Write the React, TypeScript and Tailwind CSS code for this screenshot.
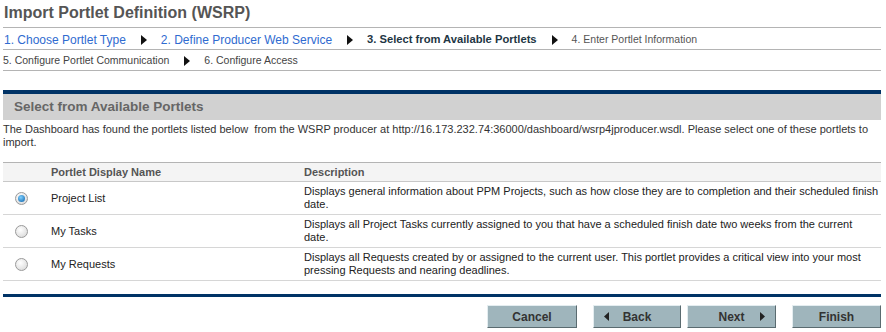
import React from "react";

const Arrow = () => (
  <svg width="7" height="10" viewBox="0 0 7 10" className="mx-[14px] shrink-0">
    <path d="M1 0 L7 5 L1 10 Z" fill="#111" />
  </svg>
);

const Radio = ({ checked }: { checked?: boolean }) => (
  <span className="relative inline-flex h-[13px] w-[13px] items-center justify-center rounded-full border border-[#9a9a9a] bg-[radial-gradient(circle_at_40%_35%,#ffffff,#d4d4d4)]">
    {checked && (
      <span className="h-[7px] w-[7px] rounded-full bg-[radial-gradient(circle_at_40%_35%,#7ed0ff,#0a5fa8)]" />
    )}
  </span>
);

const rows = [
  {
    name: "Project List",
    l1: "Displays general information about PPM Projects, such as how close they are to completion and their scheduled finish",
    l2: "date.",
    checked: true,
  },
  {
    name: "My Tasks",
    l1: "Displays all Project Tasks currently assigned to you that have a scheduled finish date two weeks from the current",
    l2: "date.",
  },
  {
    name: "My Requests",
    l1: "Displays all Requests created by or assigned to the current user. This portlet provides a critical view into your most",
    l2: "pressing Requests and nearing deadlines.",
  },
];

const Btn = ({ children, w }: { children: React.ReactNode; w: string }) => (
  <button
    className={`${w} flex h-[23px] items-center justify-center border border-t-[#e4edf0] border-l-[#e4edf0] border-b-[#5a6b70] border-r-[#5a6b70] bg-[#9fb5bc] text-[12px] font-bold text-[#333]`}
  >
    {children}
  </button>
);

export default function App() {
  return (
    <div className="w-[886px] h-[332px] overflow-hidden bg-white pl-[3px] pr-[5px] font-['Liberation_Sans',Arial,sans-serif] text-[#333]">
      <div className="pl-[1px] pt-[3px] h-[27px] text-[16px] font-bold leading-[20px] text-[#555]">
        Import Portlet Definition (WSRP)
      </div>
      <div className="border-t border-[#b4b4b4]" />
      <div className="flex h-[21px] items-center pl-[1px] pt-[2px] text-[12px]">
        <span className="text-[#2f6bd0]">1. Choose Portlet Type</span>
        <Arrow />
        <span className="text-[#2f6bd0]">2. Define Producer Web Service</span>
        <Arrow />
        <span className="text-[11.2px] font-bold text-[#1e3644]">3. Select from Available Portlets</span>
        <Arrow />
        <span className="text-[10.5px] text-[#555]">4. Enter Portlet Information</span>
      </div>
      <div className="border-t border-[#b4b4b4]" />
      <div className="flex h-[20px] items-center pt-[1px] text-[10.5px] text-[#444]">
        <span>5. Configure Portlet Communication</span>
        <Arrow />
        <span>6. Configure Access</span>
      </div>
      <div className="border-t border-[#b4b4b4]" />

      <div className="mt-[19px] h-[4px] bg-[#003366]" />
      <div className="flex h-[26px] items-center bg-[#d1d1d1] pl-[11px] text-[13.5px] font-bold text-[#666]">
        Select from Available Portlets
      </div>
      <div className="pt-[3px] text-[11px] leading-[13px] text-[#333]">
        The Dashboard has found the portlets listed below&nbsp; from the WSRP producer at
        http://16.173.232.74:36000/dashboard/wsrp4jproducer.wsdl. Please select one of these portlets to import.
      </div>

      <div className="mt-[13px] border-t border-[#b4b4b4]" />
      <div className="grid h-[18px] grid-cols-[48px_253px_1fr] items-center bg-[#f4f4f4] text-[11px] font-bold text-[#555]">
        <div />
        <div>Portlet Display Name</div>
        <div>Description</div>
      </div>
      <div className="border-t border-[#c8c8c8]" />
      {rows.map((r) => (
        <div key={r.name}>
          <div className="grid h-[32px] grid-cols-[48px_253px_1fr] items-center text-[11px] leading-[13px] text-[#222]">
            <div className="flex pl-[12px]">
              <Radio checked={r.checked} />
            </div>
            <div>{r.name}</div>
            <div className="whitespace-nowrap">
              {r.l1}
              <br />
              {r.l2}
            </div>
          </div>
          <div className="border-t border-[#d6d6d6]" />
        </div>
      ))}

      <div className="mt-[13px] h-[3px] bg-[#003366]" />
      <div className="mt-[8px] flex justify-end">
        <Btn w="w-[90px]">Cancel</Btn>
        <div className="w-[16px]" />
        <Btn w="w-[88px]">
          <span className="flex w-full items-center px-[10px]">
            <svg width="5" height="9" viewBox="0 0 5 9">
              <path d="M5 0 L0 4.5 L5 9 Z" fill="#222" />
            </svg>
            <span className="flex-1 text-center">Back</span>
            <span className="w-[5px]" />
          </span>
        </Btn>
        <div className="w-[6px]" />
        <Btn w="w-[89px]">
          <span className="flex w-full items-center px-[10px]">
            <span className="w-[5px]" />
            <span className="flex-1 text-center">Next</span>
            <svg width="5" height="9" viewBox="0 0 5 9">
              <path d="M0 0 L5 4.5 L0 9 Z" fill="#222" />
            </svg>
          </span>
        </Btn>
        <div className="w-[16px]" />
        <Btn w="w-[89px]">Finish</Btn>
      </div>
    </div>
  );
}
